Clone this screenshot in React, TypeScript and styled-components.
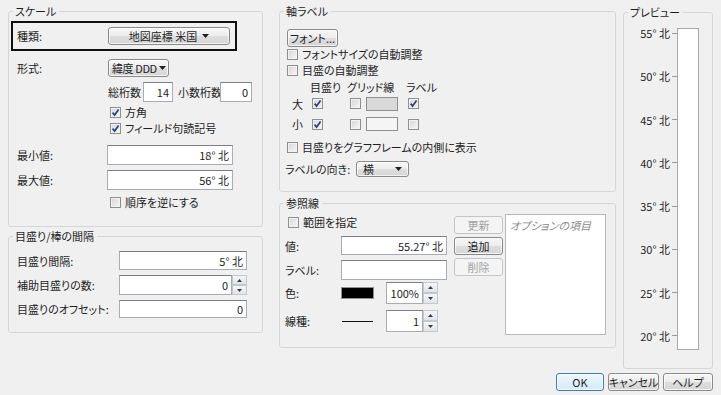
import React from "react";
import styled, { createGlobalStyle } from "styled-components";

const GlobalStyle = createGlobalStyle`
  html, body {
    margin: 0;
    padding: 0;
    background: #f0f0f0;
  }
  body {
    font-family: "Noto Sans CJK JP", "Noto Sans", sans-serif;
    font-size: 11px;
    line-height: 14px;
    color: #1e1e1e;
    font-feature-settings: "palt";
  }
`;

const Dialog = styled.div`
  width: 721px;
  height: 395px;
  box-sizing: border-box;
  padding: 11px 8px 0 8px;
  display: flex;
  flex-direction: column;
  overflow: hidden;
`;

const Main = styled.div`
  display: flex;
  align-items: flex-start;
  height: 358px;
`;

const Column = styled.div<{ $w: number; $ml?: number; $gap: number }>`
  width: ${(p) => p.$w}px;
  margin-left: ${(p) => p.$ml ?? 0}px;
  display: flex;
  flex-direction: column;
  gap: ${(p) => p.$gap}px;
  flex: none;
`;

const Group = styled.div<{ $h: number; $mt?: number }>`
  position: relative;
  box-sizing: border-box;
  height: ${(p) => p.$h}px;
  margin-top: ${(p) => p.$mt ?? 0}px;
  border: 1px solid #d3d7da;
  border-radius: 3px;
  flex: none;
`;

const Legend = styled.span`
  position: absolute;
  top: -8px;
  left: 4px;
  padding: 0 3px 0 2px;
  background: #f0f0f0;
  line-height: 14px;
  white-space: nowrap;
`;

const Row = styled.div<{ $mt?: number; $h: number; $pl?: number }>`
  display: flex;
  align-items: center;
  height: ${(p) => p.$h}px;
  margin-top: ${(p) => p.$mt ?? 0}px;
  padding-left: ${(p) => p.$pl ?? 0}px;
`;

const Label = styled.span<{ $w?: number; $ml?: number }>`
  width: ${(p) => (p.$w ? `${p.$w}px` : "auto")};
  margin-left: ${(p) => p.$ml ?? 0}px;
  flex: none;
  white-space: nowrap;
`;

const Tight = styled.span`
  letter-spacing: -0.4px;
`;

const Highlight = styled.div`
  display: flex;
  align-items: center;
  box-sizing: border-box;
  height: 30px;
  width: 226px;
  margin: 9px 0 0 2px;
  border: 2px solid #111;
  padding-left: 4px;
`;

const Button = styled.div<{
  $w: number;
  $h?: number;
  $px?: number;
  $disabled?: boolean;
  $default?: boolean;
  $align?: string;
}>`
  box-sizing: border-box;
  width: ${(p) => p.$w}px;
  height: ${(p) => p.$h ?? 18}px;
  flex: none;
  display: flex;
  align-items: center;
  justify-content: ${(p) => p.$align ?? "center"};
  gap: ${(p) => Math.max((p.$px ?? 6) - 1, 2)}px;
  padding: 0 ${(p) => p.$px ?? 6}px;
  border: 1px solid ${(p) => (p.$disabled ? "#c3c6c8" : p.$default ? "#3c7fb1" : "#8a8a8a")};
  border-radius: 3px;
  background: ${(p) =>
    p.$disabled
      ? "#f4f4f4"
      : p.$default
      ? "linear-gradient(#eef7fd, #d5eaf8)"
      : "linear-gradient(#f7f7f7 0%, #ececec 50%, #dedede 51%, #d6d6d6 100%)"};
  color: ${(p) => (p.$disabled ? "#a2a2a2" : "#1e1e1e")};
  box-shadow: inset 0 0 0 1px ${(p) => (p.$disabled ? "transparent" : "rgba(255,255,255,0.7)")};
  white-space: nowrap;
`;

const TextBox = styled.div<{ $w: number; $h: number }>`
  box-sizing: border-box;
  width: ${(p) => p.$w}px;
  height: ${(p) => p.$h}px;
  flex: none;
  background: #fff;
  border: 1px solid #a9acb2;
  border-top-color: #7d7f84;
  display: flex;
  align-items: center;
  justify-content: flex-end;
  padding: 0 3px 0 4px;
  white-space: nowrap;
`;

const SpinWrap = styled.div<{ $ml?: number }>`
  display: flex;
  margin-left: ${(p) => p.$ml ?? 0}px;
  flex: none;
`;

const SpinButtons = styled.div`
  width: 15px;
  display: flex;
  flex-direction: column;
`;

const SpinHalf = styled.div`
  flex: 1;
  box-sizing: border-box;
  border: 1px solid #c4c8cc;
  background: linear-gradient(#f4f6f9, #dfe5ec);
  display: flex;
  align-items: center;
  justify-content: center;
`;

const CheckBox = styled.span`
  box-sizing: border-box;
  width: 11px;
  height: 11px;
  flex: none;
  border: 1px solid #8e8f8f;
  background: linear-gradient(135deg, #d6d6d6, #f7f7f7);
  box-shadow: inset 0 0 0 1px #f2f2f2;
  display: flex;
  align-items: center;
  justify-content: center;
`;

const CheckText = styled.span`
  margin-left: 4px;
  white-space: nowrap;
`;

const Swatch = styled.span<{ $bg: string; $w: number; $h: number }>`
  box-sizing: border-box;
  width: ${(p) => p.$w}px;
  height: ${(p) => p.$h}px;
  flex: none;
  background: ${(p) => p.$bg};
  border: 1px solid #8f8f8f;
`;

const LineSample = styled.span`
  width: 31px;
  height: 1px;
  margin-left: 1px;
  background: #111;
  flex: none;
`;

const TickGrid = styled.div`
  display: grid;
  grid-template-columns: 23px 37px 59px auto;
  grid-template-rows: 16px 17px 24px;
  align-items: center;
  margin-top: 2px;
  padding-left: 7px;
`;

const Cell = styled.div<{ $pl?: number }>`
  display: flex;
  align-items: center;
  gap: 5px;
  padding-left: ${(p) => p.$pl ?? 0}px;
  white-space: nowrap;
`;

const RefBody = styled.div`
  display: flex;
  align-items: flex-start;
  padding-left: 5px;
`;

const RefForm = styled.div`
  width: 162px;
  display: flex;
  flex-direction: column;
`;

const RefButtons = styled.div`
  margin: 12px 0 0 7px;
  display: flex;
  flex-direction: column;
  gap: 3px;
`;

const ListBox = styled.div`
  box-sizing: border-box;
  width: 101px;
  height: 121px;
  margin: 10px 0 0 2px;
  background: #fff;
  border: 1px solid #b5b8bc;
  padding: 3px 4px;
  color: #8c8c8c;
  font-style: italic;
  white-space: nowrap;
`;

const PreviewBody = styled.div`
  display: flex;
  margin-top: 15px;
`;

const Axis = styled.div`
  width: 53px;
  height: 322px;
  box-sizing: border-box;
  padding-bottom: 9px;
  display: flex;
  flex-direction: column;
  justify-content: space-between;
`;

const AxisLabel = styled.div`
  display: flex;
  align-items: center;
  justify-content: flex-end;
  height: 10px;
  line-height: 10px;
  white-space: nowrap;
`;

const Tick = styled.span`
  width: 5px;
  height: 1px;
  margin-left: 2px;
  background: #9a9a9a;
`;

const Bar = styled.div`
  box-sizing: border-box;
  width: 22px;
  height: 322px;
  background: #fff;
  border: 1px solid #a8a8a8;
`;

const Footer = styled.div`
  display: flex;
  justify-content: flex-end;
  gap: 4px;
  margin-top: 4px;
`;

const Arrow = () => (
  <svg width="7" height="4" viewBox="0 0 7 4" style={{ flex: "none" }}>
    <polygon points="0,0 7,0 3.5,4" fill="#222" />
  </svg>
);

const Check = ({ checked }: { checked?: boolean }) => (
  <CheckBox>
    {checked && (
      <svg width="9" height="9" viewBox="0 0 9 9">
        <path d="M1.6 4.6 L3.6 7 L7.6 1.4" stroke="#2b3f8c" strokeWidth="1.7" fill="none" />
      </svg>
    )}
  </CheckBox>
);

const CheckRow = ({ checked, text, mt, pl }: { checked?: boolean; text: string; mt?: number; pl?: number }) => (
  <Row $mt={mt} $h={14} $pl={pl}>
    <Check checked={checked} />
    <CheckText>{text}</CheckText>
  </Row>
);

const Spinner = ({ value, w, h, ml }: { value: string; w: number; h: number; ml?: number }) => (
  <SpinWrap $ml={ml}>
    <TextBox $w={w} $h={h}>{value}</TextBox>
    <SpinButtons>
      <SpinHalf>
        <svg width="5" height="3" viewBox="0 0 5 3">
          <polygon points="0,3 5,3 2.5,0" fill="#3a3a3a" />
        </svg>
      </SpinHalf>
      <SpinHalf>
        <svg width="5" height="3" viewBox="0 0 5 3">
          <polygon points="0,0 5,0 2.5,3" fill="#3a3a3a" />
        </svg>
      </SpinHalf>
    </SpinButtons>
  </SpinWrap>
);

const previewLabels = [55, 50, 45, 40, 35, 30, 25, 20];

export default function App() {
  return (
    <>
      <GlobalStyle />
      <Dialog>
        <Main>
          <Column $w={255} $gap={9}>
            <Group $h={216}>
              <Legend>スケール</Legend>
              <Highlight>
                <Label $w={91}>種類:</Label>
                <Button $w={122}>
                  <span>地図座標 米国</span>
                  <Arrow />
                </Button>
              </Highlight>
              <Row $mt={8} $h={18} $pl={8}>
                <Label $w={91}>形式:</Label>
                <Button $w={61} $px={3} $align="space-between">
                  <Tight>緯度 DDD</Tight>
                  <Arrow />
                </Button>
              </Row>
              <Row $mt={5} $h={20} $pl={99}>
                <Label $w={35}>総桁数</Label>
                <TextBox $w={30} $h={20}>14</TextBox>
                <Label $w={42} $ml={5}>小数桁数</Label>
                <TextBox $w={32} $h={20}>0</TextBox>
              </Row>
              <CheckRow checked text="方角" mt={3} pl={101} />
              <CheckRow checked text="フィールド句読記号" mt={2} pl={101} />
              <Row $mt={10} $h={20} $pl={8}>
                <Label $w={90}>最小値:</Label>
                <TextBox $w={126} $h={20}>18° 北</TextBox>
              </Row>
              <Row $mt={5} $h={20} $pl={8}>
                <Label $w={90}>最大値:</Label>
                <TextBox $w={126} $h={20}>56° 北</TextBox>
              </Row>
              <CheckRow text="順序を逆にする" mt={5} pl={101} />
            </Group>
            <Group $h={97}>
              <Legend>目盛り/棒の間隔</Legend>
              <Row $mt={14} $h={19} $pl={8}>
                <Label $w={102}>目盛り間隔:</Label>
                <TextBox $w={128} $h={19}>5° 北</TextBox>
              </Row>
              <Row $mt={5} $h={20} $pl={8}>
                <Label $w={102}>補助目盛りの数:</Label>
                <Spinner value="0" w={113} h={20} />
              </Row>
              <Row $mt={5} $h={18} $pl={8}>
                <Label $w={102}>目盛りのオフセット:</Label>
                <TextBox $w={128} $h={18}>0</TextBox>
              </Row>
            </Group>
          </Column>

          <Column $w={337} $ml={16} $gap={11}>
            <Group $h={181}>
              <Legend>軸ラベル</Legend>
              <Row $mt={17} $h={18} $pl={7}>
                <Button $w={51}>フォント...</Button>
              </Row>
              <CheckRow text="フォントサイズの自動調整" mt={0} pl={7} />
              <CheckRow text="目盛の自動調整" mt={2} pl={7} />
              <TickGrid>
                <Cell />
                <Cell>目盛り</Cell>
                <Cell>グリッド線</Cell>
                <Cell>ラベル</Cell>
                <Cell $pl={5}>大</Cell>
                <Cell $pl={2}>
                  <Check checked />
                </Cell>
                <Cell $pl={3}>
                  <Check />
                  <Swatch $bg="#d9d9d9" $w={32} $h={14} />
                </Cell>
                <Cell $pl={2}>
                  <Check checked />
                </Cell>
                <Cell $pl={5}>小</Cell>
                <Cell $pl={2}>
                  <Check checked />
                </Cell>
                <Cell $pl={3}>
                  <Check />
                  <Swatch $bg="#f5f5f5" $w={32} $h={14} />
                </Cell>
                <Cell $pl={2}>
                  <Check />
                </Cell>
              </TickGrid>
              <CheckRow text="目盛りをグラフフレームの内側に表示" mt={4} pl={7} />
              <Row $mt={6} $h={17} $pl={5}>
                <Label $w={71}>ラベルの向き:</Label>
                <Button $w={53} $h={16} $align="space-between">
                  <span>横</span>
                  <Arrow />
                </Button>
              </Row>
            </Group>
            <Group $h={145}>
              <Legend>参照線</Legend>
              <RefBody>
                <RefForm>
                  <CheckRow text="範囲を指定" mt={11} pl={3} />
                  <Row $mt={7} $h={19}>
                    <Label $w={56}>値:</Label>
                    <TextBox $w={106} $h={19}>55.27° 北</TextBox>
                  </Row>
                  <Row $mt={5} $h={20}>
                    <Label $w={56}>ラベル:</Label>
                    <TextBox $w={106} $h={20} />
                  </Row>
                  <Row $mt={2} $h={22}>
                    <Label $w={56}>色:</Label>
                    <Swatch $bg="#000" $w={33} $h={12} />
                    <Spinner value="100%" w={37} h={22} ml={12} />
                  </Row>
                  <Row $mt={6} $h={22}>
                    <Label $w={56}>線種:</Label>
                    <LineSample />
                    <Spinner value="1" w={37} h={22} ml={13} />
                  </Row>
                </RefForm>
                <RefButtons>
                  <Button $w={49} $disabled>更新</Button>
                  <Button $w={49}>追加</Button>
                  <Button $w={49} $disabled>削除</Button>
                </RefButtons>
                <ListBox>オプションの項目</ListBox>
              </RefBody>
            </Group>
          </Column>

          <Column $w={90} $ml={7} $gap={0}>
            <Group $h={357} $mt={1}>
              <Legend>プレビュー</Legend>
              <PreviewBody>
                <Axis>
                  {previewLabels.map((v) => (
                    <AxisLabel key={v}>
                      <span>{v}° 北</span>
                      <Tick />
                    </AxisLabel>
                  ))}
                </Axis>
                <Bar />
              </PreviewBody>
            </Group>
          </Column>
        </Main>
        <Footer>
          <Button $w={48} $default>OK</Button>
          <Button $w={51} $px={2}>キャンセル</Button>
          <Button $w={50}>ヘルプ</Button>
        </Footer>
      </Dialog>
    </>
  );
}
